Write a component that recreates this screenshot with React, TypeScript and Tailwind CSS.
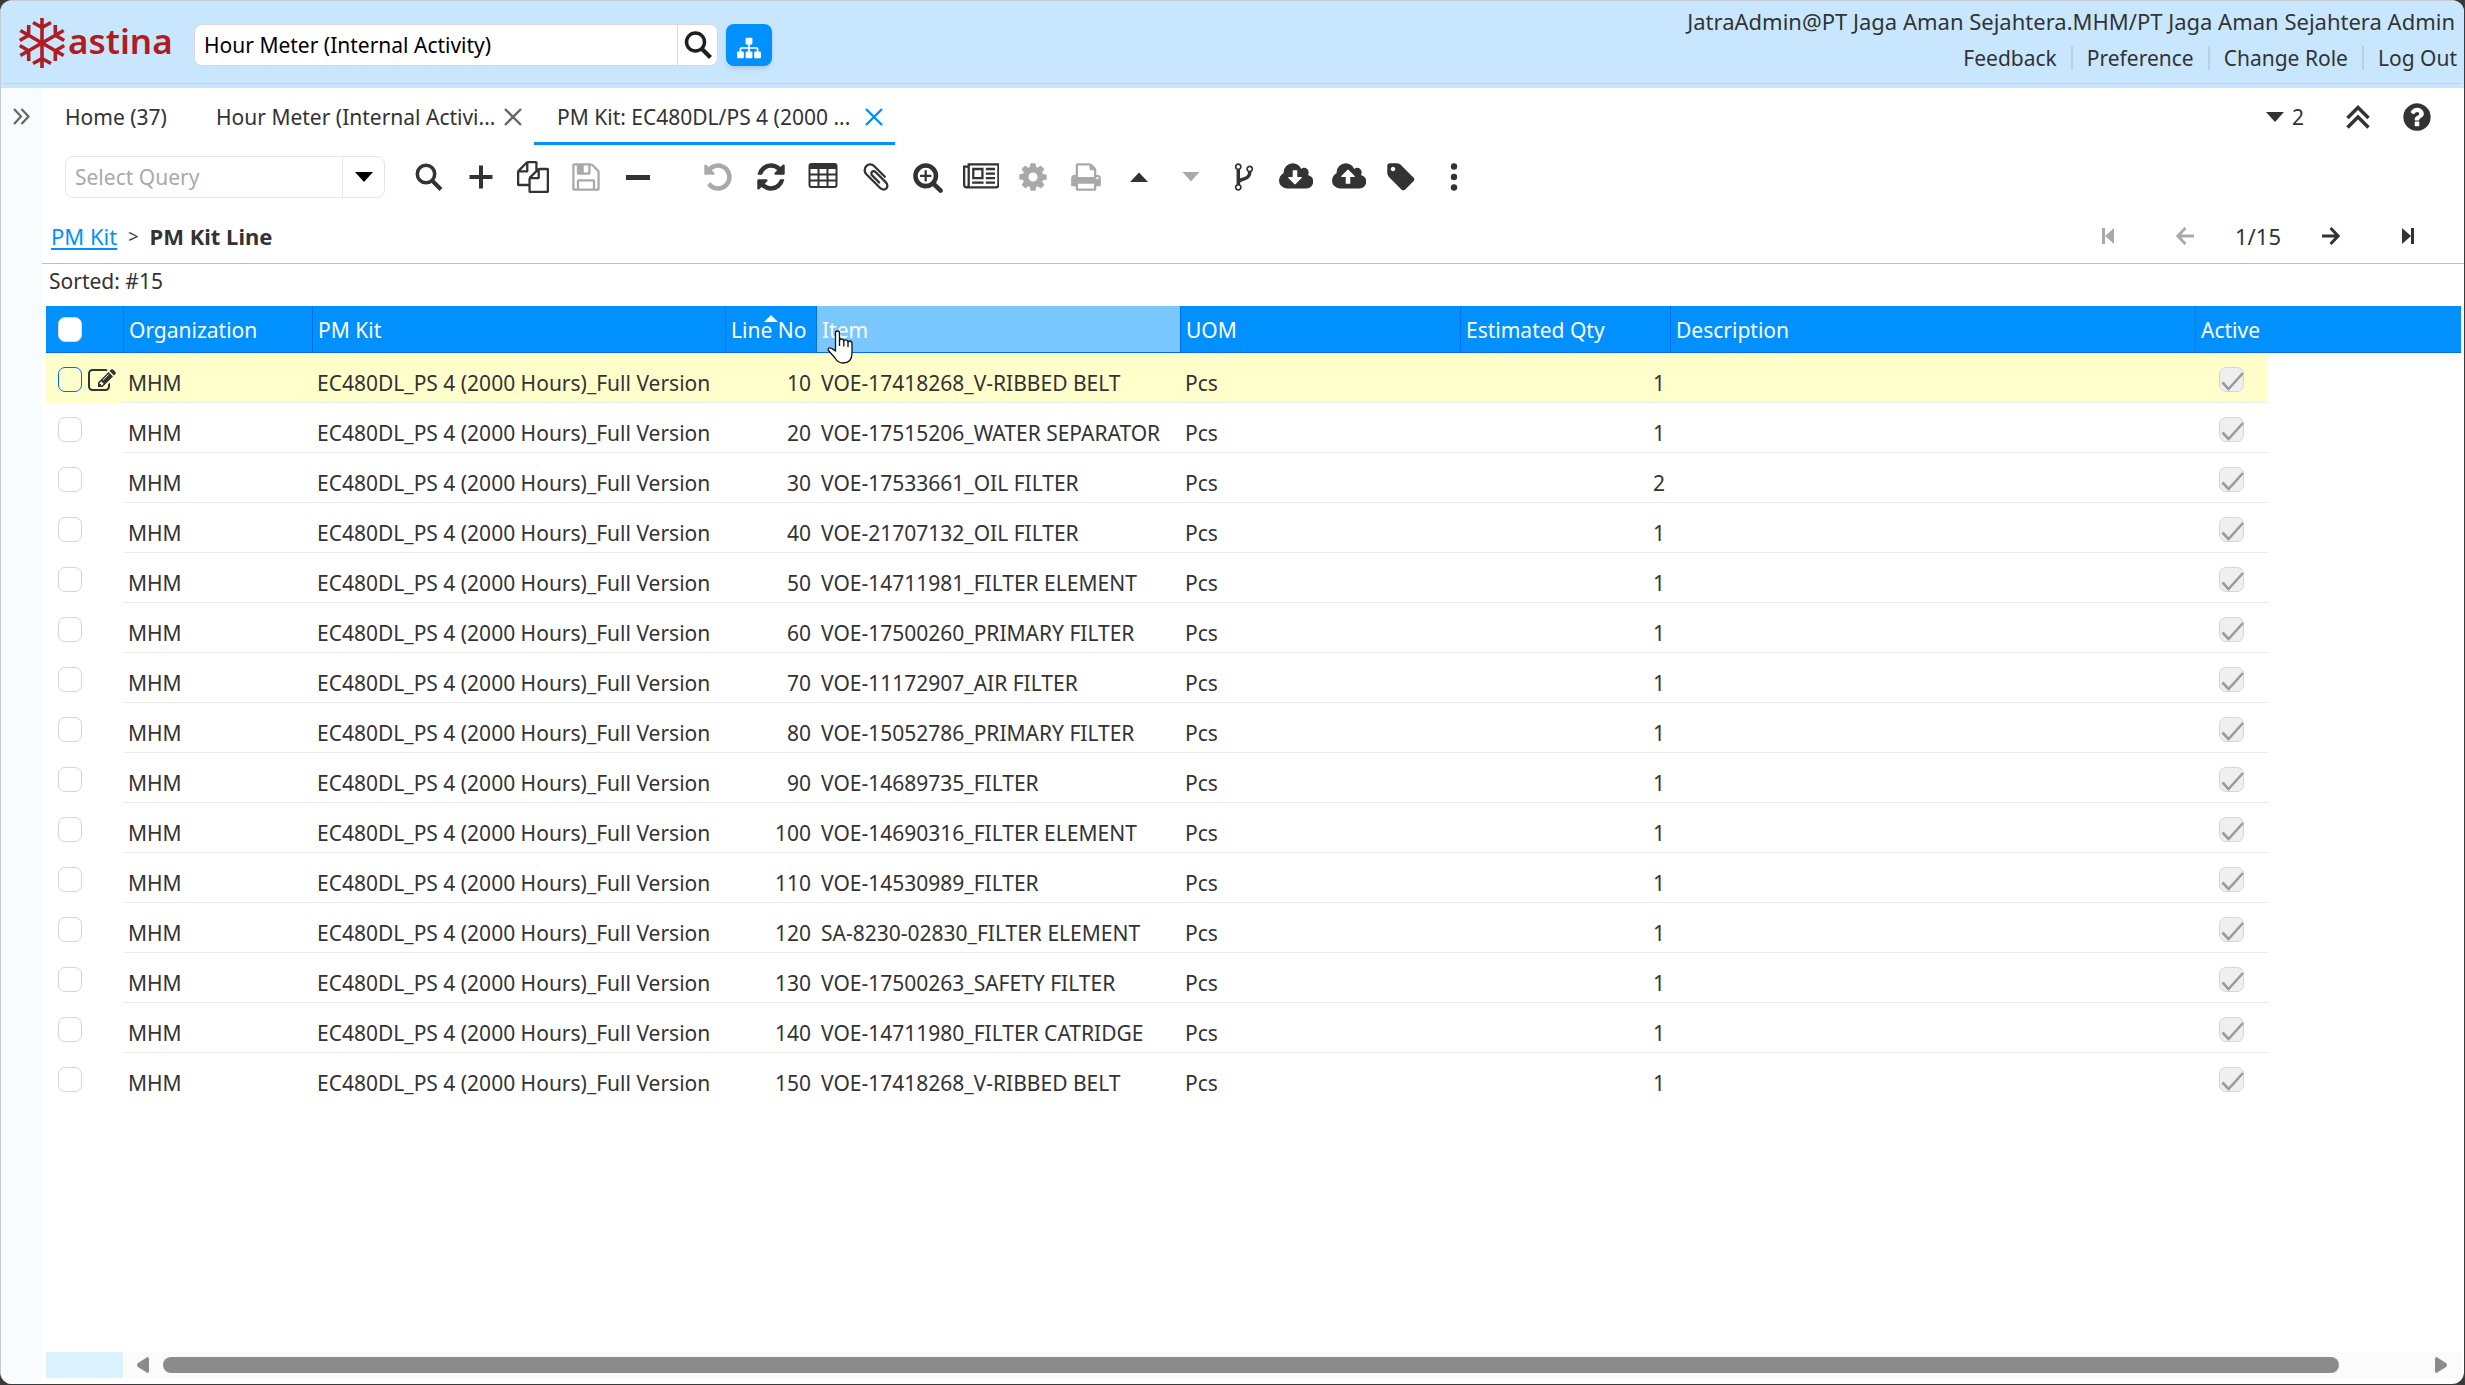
import React from "react";

/* ---------- icons (Font Awesome 4 outlines, 1792 units per em) ---------- */

const P = {
  sitemap:
    "M1792 1248v320q0 40-28 68t-68 28h-320q-40 0-68-28t-28-68v-320q0-40 28-68t68-28h96v-192h-512v192h96q40 0 68 28t28 68v320q0 40-28 68t-68 28h-320q-40 0-68-28t-28-68v-320q0-40 28-68t68-28h96v-192h-512v192h96q40 0 68 28t28 68v320q0 40-28 68t-68 28h-320q-40 0-68-28t-28-68v-320q0-40 28-68t68-28h96v-192q0-52 38-90t90-38h512v-192h-96q-40 0-68-28t-28-68v-320q0-40 28-68t68-28h320q40 0 68 28t28 68v320q0 40-28 68t-68 28h-96v192h512q52 0 90 38t38 90v192h96q40 0 68 28t28 68z",
  copy: "M1696 384q40 0 68 28t28 68v1216q0 40-28 68t-68 28h-960q-40 0-68-28t-28-68v-288h-544q-40 0-68-28t-28-68v-672q0-40 20-88t48-76l408-408q28-28 76-48t88-20h416q40 0 68 28t28 68v328q68-40 128-40h416zm-544 213l-299 299h299v-299zm-640-384l-299 299h299v-299zm196 647l316-316v-416h-384v416q0 40-28 68t-68 28h-416v640h512v-256q0-40 20-88t48-76zm956 804v-1152h-384v416q0 40-28 68t-68 28h-416v640h896z",
  save: "M512 1536h768v-384h-768v384zm896 0h128v-896q0-14-10-38.5t-20-34.5l-281-281q-10-10-34-20t-39-10v416q0 40-28 68t-68 28h-576q-40 0-68-28t-28-68v-416h-128v1280h128v-416q0-40 28-68t68-28h832q40 0 68 28t28 68v416zm-384-928v-320q0-13-9.5-22.5t-22.5-9.5h-192q-13 0-22.5 9.5t-9.5 22.5v320q0 13 9.5 22.5t22.5 9.5h192q13 0 22.5-9.5t9.5-22.5zm640 32v928q0 40-28 68t-68 28h-1344q-40 0-68-28t-28-68v-1344q0-40 28-68t68-28h928q40 0 88 20t76 48l280 280q28 28 48 76t20 88z",
  undo: "M1664 896q0 156-61 298t-164 245-245 164-298 61q-172 0-327-72.5t-264-204.5q-7-10-6.5-22.5t8.5-20.5l137-138q10-9 25-9 16 2 23 12 73 95 179 147t225 52q104 0 198.500-40.5t163.500-109.5 109.500-163.5 40.500-198.500-40.500-198.500-109.500-163.500-163.500-109.500-198.500-40.500q-98 0-188 35.500t-160 101.500l137 138q31 30 14 69-17 40-59 40h-448q-26 0-45-19t-19-45v-448q0-42 40-59 39-17 69 14l130 129q107-101 244.500-156.500t284.500-55.500q156 0 298 61t245 164 164 245 61 298z",
  refresh:
    "M1639 1056q0 5-1 7-64 268-268 434.5t-478 166.5q-146 0-282.5-55t-243.5-157l-129 129q-19 19-45 19t-45-19-19-45v-448q0-26 19-45t45-19h448q26 0 45 19t19 45-19 45l-137 137q71 66 161 102t187 36q134 0 250-65t186-179q11-17 53-117 8-23 30-23h192q13 0 22.5 9.5t9.5 22.5zm25-800v448q0 26-19 45t-45 19h-448q-26 0-45-19t-19-45 19-45l138-138q-148-137-349-137-134 0-250 65t-186 179q-11 17-53 117-8 23-30 23h-199q-13 0-22.5-9.5t-9.5-22.5v-7q65-268 270-434.5t480-166.5q146 0 284 55.5t245 156.5l130-129q19-19 45-19t45 19 19 45z",
  clip: "M1596 1385q0 117-79 196t-196 79q-135 0-235-100l-777-776q-113-115-113-271 0-159 110-270t269-111q158 0 273 113l605 606q10 10 10 22 0 16-30.5 46.5t-46.5 30.5q-13 0-23-10l-606-607q-79-77-181-77-106 0-179 75t-73 181q0 105 76 181l776 777q63 63 145 63 64 0 106-42t42-106q0-82-63-145l-581-581q-26-24-60-24-29 0-48 19t-19 48q0 32 25 59l410 410q10 10 10 22 0 16-31 47t-47 31q-12 0-22-10l-410-410q-63-61-63-149 0-82 57-139t139-57q88 0 149 63l581 581q100 98 100 235z",
  zoom: "M1088 800v64q0 13-9.5 22.5t-22.5 9.5h-224v224q0 13-9.5 22.5t-22.5 9.5h-64q-13 0-22.5-9.5t-9.5-22.5v-224h-224q-13 0-22.5-9.5t-9.5-22.5v-64q0-13 9.5-22.5t22.5-9.5h224v-224q0-13 9.5-22.5t22.5-9.5h64q13 0 22.5 9.5t9.5 22.5v224h224q13 0 22.5 9.5t9.5 22.5zm128 32q0-185-131.5-316.5t-316.5-131.5-316.5 131.5-131.5 316.5 131.5 316.5 316.5 131.5 316.5-131.5 131.5-316.5zm512 832q0 53-37.5 90.5t-90.5 37.5q-54 0-90-38l-343-342q-179 124-399 124-143 0-273.5-55.5t-225-150-150-225-55.5-273.5 55.5-273.5 150-225 225-150 273.5-55.5 273.5 55.5 225 150 150 225 55.5 273.5q0 220-124 399l343 343q37 37 37 90z",
  news: "M1024 512h-384v384h384v-384zm128 640v128h-640v-128h640zm0-768v640h-640v-640h640zm640 768v128h-512v-128h512zm0-256v128h-512v-128h512zm0-256v128h-512v-128h512zm0-256v128h-512v-128h512zm-1536 960v-960h-128v960q0 26 19 45t45 19 45-19 19-45zm1664 0v-1088h-1536v1088q0 33-11 64h1483q26 0 45-19t19-45zm128-1216v1216q0 80-56 136t-136 56h-1664q-80 0-136-56t-56-136v-1088h256v-128h1792z",
  cog: "M1152 896q0-106-75-181t-181-75-181 75-75 181 75 181 181 75 181-75 75-181zm512-109v222q0 12-8 23t-20 13l-185 28q-19 54-39 91 35 50 107 138 10 12 10 25t-9 23q-27 37-99 108t-94 71q-12 0-26-9l-138-108q-44 23-91 38-16 136-29 186-7 28-36 28h-222q-14 0-24.5-8.5t-11.5-21.5l-28-184q-49-16-90-37l-141 107q-10 9-25 9-14 0-25-11-126-114-165-168-7-10-7-23 0-12 8-23 15-21 51-66.5t54-70.5q-27-50-41-99l-183-27q-13-2-21-12.5t-8-23.5v-222q0-12 8-23t19-13l186-28q14-46 39-92-40-57-107-138-10-12-10-24 0-10 9-23 26-36 98.5-107.5t94.5-71.5q13 0 26 10l138 107q44-23 91-38 16-136 29-186 7-28 36-28h222q14 0 24.5 8.5t11.5 21.5l28 184q49 16 90 37l142-107q9-9 24-9 13 0 25 10 129 119 165 170 7 8 7 22 0 12-8 23-15 21-51 66.5t-54 70.5q26 50 41 98l183 28q13 2 21 12.5t8 23.5z",
  print:
    "M448 1536h896v-256h-896v256zm0-640h896v-384h-160q-40 0-68-28t-28-68v-160h-640v640zm1152 64q0-26-19-45t-45-19-45 19-19 45 19 45 45 19 45-19 19-45zm128 0v416q0 13-9.5 22.5t-22.5 9.5h-224v160q0 40-28 68t-68 28h-960q-40 0-68-28t-28-68v-160h-224q-13 0-22.5-9.5t-9.5-22.5v-416q0-79 56.5-135.5t135.5-56.5h64v-544q0-40 28-68t68-28h672q40 0 88 20t76 48l152 152q28 28 48 76t20 88v256h64q79 0 135.5 56.5t56.5 135.5z",
  fork: "M672 1472q0-40-28-68t-68-28-68 28-28 68 28 68 68 28 68-28 28-68zm0-1152q0-40-28-68t-68-28-68 28-28 68 28 68 68 28 68-28 28-68zm640 128q0-40-28-68t-68-28-68 28-28 68 28 68 68 28 68-28 28-68zm96 0q0 52-26 96.5t-70 69.5q-2 287-226 414-67 38-203 81-128 40-169.5 71t-41.5 100v26q44 25 70 69.5t26 96.5q0 80-56 136t-136 56-136-56-56-136q0-52 26-96.5t70-69.5v-820q-44-25-70-69.5t-26-96.5q0-80 56-136t136-56 136 56 56 136q0 52-26 96.5t-70 69.5v497q54-26 154-57 55-17 87.5-29.5t70.5-31 59-39.5 40.5-51 28-69.5 8.5-91.5q-44-25-70-69.5t-26-96.5q0-80 56-136t136-56 136 56 56 136z",
  cloudDown:
    "M1280 928q0-14-9-23t-23-9h-224v-352q0-13-9.5-22.5t-22.5-9.5h-192q-13 0-22.5 9.5t-9.5 22.5v352h-224q-13 0-22.5 9.5t-9.5 22.5q0 14 9 23l352 352q9 9 23 9t23-9l351-351q10-12 10-24zm640 224q0 159-112.5 271.5t-271.5 112.5h-1088q-185 0-316.5-131.5t-131.5-316.5q0-130 70-240t188-165q-2-30-2-43 0-212 150-362t362-150q156 0 285.5 87t188.5 231q71-62 166-62 106 0 181 75t75 181q0 76-41 138 130 31 213.5 135.5t83.5 238.5z",
  cloudUp:
    "M1280 864q0-14-9-23l-352-352q-9-9-23-9t-23 9l-351 351q-10 12-10 24 0 14 9 23t23 9h224v352q0 13 9.5 22.5t22.5 9.5h192q13 0 22.5-9.5t9.5-22.5v-352h224q13 0 22.5-9.5t9.5-22.5zm640 288q0 159-112.5 271.5t-271.5 112.5h-1088q-185 0-316.5-131.5t-131.5-316.5q0-130 70-240t188-165q-2-30-2-43 0-212 150-362t362-150q156 0 285.5 87t188.5 231q71-62 166-62 106 0 181 75t75 181q0 76-41 138 130 31 213.5 135.5t83.5 238.5z",
  tag: "M576 448q0-53-37.5-90.5t-90.5-37.5-90.5 37.5-37.5 90.5 37.5 90.5 90.5 37.5 90.5-37.5 37.5-90.5zm1067 576q0 53-37 90l-491 492q-39 37-91 37-53 0-90-37l-715-716q-38-37-64.5-101t-26.5-117v-416q0-52 38-90t90-38h416q53 0 117 26.5t102 64.5l715 714q37 39 37 91z",
  edit: "M888 1184l116-116-152-152-116 116v56h96v96h56zm440-720q-16-16-33 1l-350 350q-17 17-1 33t33-1l350-350q17-17 1-33zm80 594v190q0 119-84.5 203.5t-203.5 84.5h-832q-119 0-203.5-84.5t-84.5-203.5v-832q0-119 84.5-203.5t203.5-84.5h832q63 0 117 25 15 7 18 23 3 17-9 29l-49 49q-14 14-32 8-23-6-45-6h-832q-66 0-113 47t-47 113v832q0 66 47 113t113 47h832q66 0 113-47t47-113v-126q0-13 9-22l64-64q15-15 35-7t20 29zm-96-738l288 288-672 672h-288v-288zm444 132l-92 92-288-288 92-92q28-28 68-28t68 28l152 152q28 28 28 68t-28 68z",
  help: "M1024 1376v-192q0-14-9-23t-23-9h-192q-14 0-23 9t-9 23v192q0 14 9 23t23 9h192q14 0 23-9t9-23zm256-672q0-88-55.5-163t-138.5-116-170-41q-243 0-371 213-15 24 8 42l132 100q7 6 19 6 16 0 25-12 53-68 86-92 34-24 86-24 48 0 85.5 26t37.5 59q0 38-20 61t-68 45q-63 28-115.5 86.5t-52.5 125.5v36q0 14 9 23t23 9h192q14 0 23-9t9-23q0-19 21.5-49.5t54.5-49.5q32-18 49-28.5t46-35 44.5-48 28-60.5 12.5-81zm384 192q0 209-103 385.5t-279.5 279.5-385.5 103-385.5-103-279.5-279.5-103-385.5 103-385.5 279.5-279.5 385.5-103 385.5 103 279.5 279.5 103 385.5z",
};

function Fa({ d, w = 1792, className = "h-8" }: { d: string; w?: number; className?: string }) {
  return (
    <svg viewBox={`0 0 ${w} 1792`} className={`${className} shrink-0`} fill="currentColor" aria-hidden="true">
      <path d={d} />
    </svg>
  );
}

const Lens = () => (
  <svg viewBox="0 0 32 32" className="size-8" fill="none" stroke="currentColor" strokeWidth="3.5" aria-hidden="true">
    <circle cx="14" cy="13" r="8.7" />
    <path d="M20 19.500L29 28.500" strokeWidth="4" />
  </svg>
);
const Plus = () => (
  <svg viewBox="0 0 32 32" className="size-8" stroke="currentColor" strokeWidth="4" aria-hidden="true">
    <path d="M4.500 16H27.500M16 4.500V27.500" />
  </svg>
);
const Minus = () => (
  <svg viewBox="0 0 32 32" className="size-8" stroke="currentColor" strokeWidth="5" aria-hidden="true">
    <path d="M4 16.500H28" />
  </svg>
);
const Grid = () => (
  <svg viewBox="0 0 32 32" className="size-8" fill="none" stroke="currentColor" strokeWidth="2" aria-hidden="true">
    <rect x="2.500" y="3" width="27" height="23" rx="2" />
    <path d="M3 5.500H29" strokeWidth="5" />
    <path d="M11.500 6V26M20.500 6V26M3 13.500H29M3 19.500H29" />
  </svg>
);
const Up = () => (
  <svg viewBox="0 0 32 32" className="size-8" fill="currentColor" aria-hidden="true">
    <path d="M7 21L16 11.500L25 21Z" />
  </svg>
);
const Down = () => (
  <svg viewBox="0 0 32 32" className="size-8" fill="currentColor" aria-hidden="true">
    <path d="M7.500 11H24.500L16 20.500Z" />
  </svg>
);
const Dots = () => (
  <svg viewBox="0 0 32 32" className="size-8" fill="currentColor" aria-hidden="true">
    <circle cx="16" cy="5.500" r="3.200" />
    <circle cx="16" cy="16" r="3.200" />
    <circle cx="16" cy="26.500" r="3.200" />
  </svg>
);
const Cross = () => (
  <svg viewBox="0 0 18 18" className="size-[18px]" fill="none" stroke="currentColor" strokeWidth="2.400" aria-hidden="true">
    <path d="M1 1L17 17M17 1L1 17" />
  </svg>
);

function Snowflake() {
  return (
    <svg viewBox="0 0 48 52" className="h-[52px] w-12 shrink-0" fill="none" stroke="#b01c24" strokeWidth="3.600" aria-hidden="true">
      {[0, 60, 120, 180, 240, 300].map((a) => (
        <path key={a} transform={`rotate(${a} 24 26)`} d="M24 26V1M15 5.500L24 10.500L33 5.500" />
      ))}
    </svg>
  );
}

/* ---------- data ---------- */

const ITEMS: [string, number][] = [
  ["VOE-17418268_V-RIBBED BELT", 1],
  ["VOE-17515206_WATER SEPARATOR", 1],
  ["VOE-17533661_OIL FILTER", 2],
  ["VOE-21707132_OIL FILTER", 1],
  ["VOE-14711981_FILTER ELEMENT", 1],
  ["VOE-17500260_PRIMARY FILTER", 1],
  ["VOE-11172907_AIR FILTER", 1],
  ["VOE-15052786_PRIMARY FILTER", 1],
  ["VOE-14689735_FILTER", 1],
  ["VOE-14690316_FILTER ELEMENT", 1],
  ["VOE-14530989_FILTER", 1],
  ["SA-8230-02830_FILTER ELEMENT", 1],
  ["VOE-17500263_SAFETY FILTER", 1],
  ["VOE-14711980_FILTER CATRIDGE", 1],
  ["VOE-17418268_V-RIBBED BELT", 1],
];

type Tool = { label: string; icon: React.ReactNode; off?: boolean };
const TOOLS_A: Tool[] = [
  { label: "Find", icon: <Lens /> },
  { label: "New", icon: <Plus /> },
  { label: "Copy", icon: <Fa d={P.copy} /> },
  { label: "Save", icon: <Fa d={P.save} />, off: true },
  { label: "Delete", icon: <Minus /> },
];
const TOOLS_B: Tool[] = [
  { label: "Undo", icon: <Fa d={P.undo} />, off: true },
  { label: "Refresh", icon: <Fa d={P.refresh} /> },
  { label: "Grid toggle", icon: <Grid /> },
  { label: "Attachment", icon: <Fa d={P.clip} /> },
  { label: "Zoom", icon: <Fa d={P.zoom} /> },
  { label: "Report", icon: <Fa d={P.news} w={2048} /> },
  { label: "Process", icon: <Fa d={P.cog} />, off: true },
  { label: "Print", icon: <Fa d={P.print} />, off: true },
  { label: "Parent record", icon: <Up /> },
  { label: "Detail record", icon: <Down />, off: true },
  { label: "Workflow", icon: <Fa d={P.fork} /> },
  { label: "Export", icon: <Fa d={P.cloudDown} w={1920} /> },
  { label: "Import", icon: <Fa d={P.cloudUp} w={1920} /> },
  { label: "Label", icon: <Fa d={P.tag} /> },
  { label: "More", icon: <Dots /> },
];

function Tools({ items, className }: { items: Tool[]; className: string }) {
  return (
    <div className={`flex justify-between ${className}`}>
      {items.map((t) => (
        <button
          key={t.label}
          type="button"
          aria-label={t.label}
          disabled={t.off}
          className="flex size-10 items-center justify-center disabled:text-[#a9a9a9]"
        >
          {t.icon}
        </button>
      ))}
    </div>
  );
}

/* ---------- sections ---------- */

function Header() {
  return (
    <header className="h-[87px] bg-[#c8e7ff] px-[3px]">
      <div className="flex h-[83px] justify-between border-b border-[#a8dcf8]">
        <div className="flex items-center">
          <div className="flex w-[190px] items-center gap-0.5 pt-0.5 pl-3.5">
            <Snowflake />
            <span className="pb-1.5 font-['Noto_Sans'] text-[35px] leading-none font-semibold text-[#b01c24]">astina</span>
          </div>
          <div className="mt-1.5 flex h-[42px] w-[524px] overflow-hidden rounded-lg border border-[#d9d9d9] bg-white">
            <input
              aria-label="Search menu"
              defaultValue="Hour Meter (Internal Activity)"
              className="min-w-0 flex-1 px-[9px] text-black outline-none"
            />
            <button type="button" aria-label="Search" className="flex w-10 items-center justify-center border-l border-[#d9d9d9] text-[#1f1f1f]">
              <svg viewBox="0 0 28 28" className="size-7" fill="none" stroke="currentColor" strokeWidth="3.500" aria-hidden="true">
                <circle cx="11.500" cy="11" r="9" />
                <path d="M17.500 17.500L26.500 26.500" strokeWidth="4.200" />
              </svg>
            </button>
          </div>
          <button type="button" aria-label="Menu tree" className="mt-1.5 ml-2 flex h-[42px] w-[46px] items-center justify-center rounded-lg bg-[#0091ff] pt-1.5 text-white shadow-md">
            <Fa d={P.sitemap} className="h-6" />
          </button>
        </div>
        <div className="flex flex-col items-end pt-1.5 text-[#333]">
          <span className="pr-1.5 text-[22px] leading-7">JatraAdmin@PT Jaga Aman Sejahtera.MHM/PT Jaga Aman Sejahtera Admin</span>
          <nav className="mt-[11px] flex items-center divide-x-2 divide-[#b9d0e2] leading-6">
            {["Feedback", "Preference", "Change Role", "Log Out"].map((l) => (
              <a key={l} href="#" className="px-3.5 last:pr-1">
                {l}
              </a>
            ))}
          </nav>
        </div>
      </div>
    </header>
  );
}

function Tabs() {
  return (
    <div className="flex h-[57px] justify-between">
      <div className="flex">
        <button type="button" className="w-[151px] pl-[23px] text-left">Home (37)</button>
        <div className="flex w-[341px] items-center pl-[23px]">
          <button type="button" className="w-72 truncate text-left">Hour Meter (Internal Activi...</button>
          <button type="button" aria-label="Close Hour Meter" className="text-[#666]"><Cross /></button>
        </div>
        <div className="flex w-[361px] items-center border-b-[3px] border-[#0091ff] pt-[3px] pl-[23px]">
          <button type="button" className="w-[308px] truncate text-left">PM Kit: EC480DL/PS 4 (2000 ...</button>
          <button type="button" aria-label="Close PM Kit" className="text-[#0091ff]"><Cross /></button>
        </div>
      </div>
      <div className="flex items-center pr-[31px]">
        <button type="button" className="flex items-center gap-2">
          <svg viewBox="0 0 18 10" className="h-2.5 w-[18px]" fill="currentColor" aria-hidden="true"><path d="M0 0H18L9 10Z" /></svg>
          2
        </button>
        <button type="button" aria-label="Collapse" className="ml-10">
          <svg viewBox="0 0 28 28" className="size-7" fill="none" stroke="currentColor" strokeWidth="3.500" aria-hidden="true">
            <path d="M3.500 15L14 4.500L24.500 15M3.500 24.500L14 14L24.500 24.500" />
          </svg>
        </button>
        <button type="button" aria-label="Help" className="ml-[29px]">
          <Fa d={P.help} />
        </button>
      </div>
    </div>
  );
}

function QueryBar() {
  return (
    <div className="flex h-16 items-center pl-[23px]">
      <div className="flex h-[42px] w-80 overflow-hidden rounded-lg border border-[#e6e6e6]">
        <input aria-label="Select Query" placeholder="Select Query" className="min-w-0 flex-1 px-[9px] outline-none placeholder:text-[#a9a9a9]" />
        <button type="button" aria-label="Open queries" className="flex w-[42px] items-center justify-center border-l border-[#e6e6e6] text-black">
          <svg viewBox="0 0 18 10" className="h-2.5 w-[18px]" fill="currentColor" aria-hidden="true"><path d="M0 0H18L9 10Z" /></svg>
        </button>
      </div>
      <div className="flex gap-10 pl-[23px]">
        <Tools items={TOOLS_A} className="w-[250px]" />
        <Tools items={TOOLS_B} className="w-[776px]" />
      </div>
    </div>
  );
}

function Crumbs() {
  return (
    <div className="flex h-[55px] items-center justify-between border-b border-[#bfbfbf] pl-[9px]">
      <div className="flex items-center text-[22px]">
        <a href="#" className="text-[#0091ff] underline decoration-2 underline-offset-[3px]">PM Kit</a>
        <span className="px-[11px] text-lg">&gt;</span>
        <b className="font-bold">PM Kit Line</b>
      </div>
      <div className="flex items-center pr-[50px]">
        <button type="button" aria-label="First record" disabled className="text-[#a9a9a9]">
          <svg viewBox="0 0 12 16" className="h-4 w-3" fill="currentColor" aria-hidden="true"><path d="M0 0H3V16H0ZM12 0V16L3 8Z" /></svg>
        </button>
        <button type="button" aria-label="Previous record" disabled className="ml-[62px] text-[#a9a9a9]">
          <svg viewBox="0 0 18 18" className="size-[18px]" fill="none" stroke="currentColor" strokeWidth="2.800" aria-hidden="true"><path d="M18 9H2M9.500 1L1.800 9L9.500 17" /></svg>
        </button>
        <span className="w-[128px] text-center text-[22px]">1/15</span>
        <button type="button" aria-label="Next record">
          <svg viewBox="0 0 18 18" className="size-[18px]" fill="none" stroke="currentColor" strokeWidth="3" aria-hidden="true"><path d="M0 9H16M8.500 1L16.200 9L8.500 17" /></svg>
        </button>
        <button type="button" aria-label="Last record" className="ml-[62px]">
          <svg viewBox="0 0 12 16" className="h-4 w-3" fill="currentColor" aria-hidden="true"><path d="M9 0H12V16H9ZM0 0V16L9 8Z" /></svg>
        </button>
      </div>
    </div>
  );
}

const TH = "relative border-l border-[#006eea] px-[5px] pt-0.5 text-left font-normal";
const TD = "border-b border-[#ececec] px-[5px] pt-2.5 group-first:bg-[#ffffcc] group-last:border-b-transparent";

function Lines() {
  return (
    <table className="w-full table-fixed border-separate border-spacing-0 whitespace-nowrap">
      <colgroup>
        <col className="w-[77px]" />
        <col className="w-[189px]" />
        <col className="w-[413px]" />
        <col className="w-[91px]" />
        <col className="w-[364px]" />
        <col className="w-[280px]" />
        <col className="w-[210px]" />
        <col className="w-[525px]" />
        <col className="w-[73px]" />
        <col />
      </colgroup>
      <thead>
        <tr className="h-[47px] bg-[#0091ff] text-white *:border-b *:border-b-[#006eea]">
          <th className="pl-3 text-left">
            <input type="checkbox" aria-label="Select all" className="block h-[25px] w-6 appearance-none rounded-[7px] border border-[#d9d9d9] bg-white" />
          </th>
          <th className={TH}>Organization</th>
          <th className={TH}>PM Kit</th>
          <th className={TH}>
            Line No
            <svg viewBox="0 0 14 7" className="absolute top-[9px] left-[38px] h-[7px] w-3.5" fill="#fff" aria-hidden="true"><path d="M0 7L7 0L14 7Z" /></svg>
          </th>
          <th className={`${TH} bg-[#7ac6ff]`}>
            Item
            <svg viewBox="0 0 26 34" className="absolute top-6 left-2.5 z-10 h-[34px] w-[26px]" fill="#fff" stroke="#111" strokeWidth="1.300" strokeLinejoin="round" aria-hidden="true">
              <path d="M8.500 3Q8.500 1 10.500 1T12.500 3V10.500Q12.500 9 14.500 9T16.800 11Q17 9.800 18.800 9.800T21 12Q21.200 11 22.800 11T25 13V23Q25 33 16 33Q11 33 8 28L1.500 20.500Q0.500 18.800 2 18T8.500 21Z" />
              <path d="M12.500 10V16M16.800 11V16.500M21 12V17" fill="none" />
            </svg>
          </th>
          <th className={TH}>UOM</th>
          <th className={TH}>Estimated Qty</th>
          <th className={TH}>Description</th>
          <th className={TH}>Active</th>
          <th />
        </tr>
      </thead>
      <tbody>
        {ITEMS.map(([item, qty], i) => (
          <tr key={i} className="group h-[50px]">
            <td className="pb-[9px] pl-3 align-bottom group-first:bg-[#ffffcc]">
              <div className="flex h-[27px] items-start gap-1.5">
                <input
                  type="checkbox"
                  aria-label={`Select line ${(i + 1) * 10}`}
                  className="h-[25px] w-6 shrink-0 appearance-none rounded-[7px] border border-[#d6d6d6] group-first:border-[#0068ee]"
                />
                {i === 0 && (
                  <button type="button" aria-label="Edit record">
                    <Fa d={P.edit} className="h-7" />
                  </button>
                )}
              </div>
            </td>
            <td className={TD}>MHM</td>
            <td className={TD}>EC480DL_PS 4 (2000 Hours)_Full Version</td>
            <td className={`${TD} text-right`}>{(i + 1) * 10}</td>
            <td className={TD}>{item}</td>
            <td className={TD}>Pcs</td>
            <td className={`${TD} text-right`}>{qty}</td>
            <td className={TD} />
            <td className="border-b border-[#ececec] pt-1 group-first:bg-[#ffffcc] group-last:border-b-transparent">
              <span className="relative mx-auto block h-[25px] w-[25px]">
                <input
                  type="checkbox"
                  aria-label={`Line ${(i + 1) * 10} active`}
                  defaultChecked
                  disabled
                  className="block size-full appearance-none rounded-[7px] border border-[#d6d6d6] bg-[#efefef]"
                />
                <svg viewBox="0 0 25 25" className="absolute inset-0 size-full" fill="none" stroke="#9b9b9b" strokeWidth="2.600" aria-hidden="true">
                  <path d="M3.500 15.500L9.500 22L24 6" />
                </svg>
              </span>
            </td>
            <td />
          </tr>
        ))}
      </tbody>
    </table>
  );
}

function ScrollBar() {
  return (
    <div className="mr-[3px] mb-1.5 flex h-[26px]">
      <div className="w-[77px] bg-[#d9f2fe]" />
      <div className="flex flex-1 items-center bg-[#fbfbfb] px-3.5 text-[#8b8b8b]">
        <svg viewBox="0 0 12 16" className="h-4 w-3" fill="currentColor" aria-hidden="true"><path d="M10.500 0Q12 0 12 2V14Q12 16 10.500 16L1 10Q-1 8 1 6Z" /></svg>
        <div className="mr-24 ml-3.5 h-4 flex-1 rounded-full bg-[#8b8b8b]" />
        <svg viewBox="0 0 12 16" className="h-4 w-3" fill="currentColor" aria-hidden="true"><path d="M1.500 0Q0 0 0 2V14Q0 16 1.500 16L11 10Q13 8 11 6Z" /></svg>
      </div>
    </div>
  );
}

export default function App() {
  return (
    <div className="h-screen bg-[#3a3a3a] pr-px pb-px font-['Noto_Sans',sans-serif] text-[21px] leading-7 text-[#333]">
      <div className="flex h-full flex-col overflow-hidden rounded-xl border-t border-l border-[#c3ccd4] bg-white">
        <Header />
        <div className="flex min-h-0 flex-1">
          <aside className="w-[41px] shrink-0 bg-[#f8fcff] pt-5 pl-3 text-[#666]">
            <button type="button" aria-label="Expand menu" className="block">
              <svg viewBox="0 0 17 17" className="size-[17px]" fill="none" stroke="currentColor" strokeWidth="2.200" aria-hidden="true">
                <path d="M1 1L8 8.500L1 16M8.500 1L15.500 8.500L8.500 16" />
              </svg>
            </button>
          </aside>
          <main className="flex min-w-0 flex-1 flex-col">
            <Tabs />
            <QueryBar />
            <Crumbs />
            <div className="h-[42px] pt-[3px] pl-[7px]">Sorted: #15</div>
            <div className="flex min-h-0 flex-1 flex-col pl-1">
              <div className="min-h-0 flex-1 overflow-hidden pr-[3px]">
                <Lines />
              </div>
              <ScrollBar />
            </div>
          </main>
        </div>
      </div>
    </div>
  );
}
